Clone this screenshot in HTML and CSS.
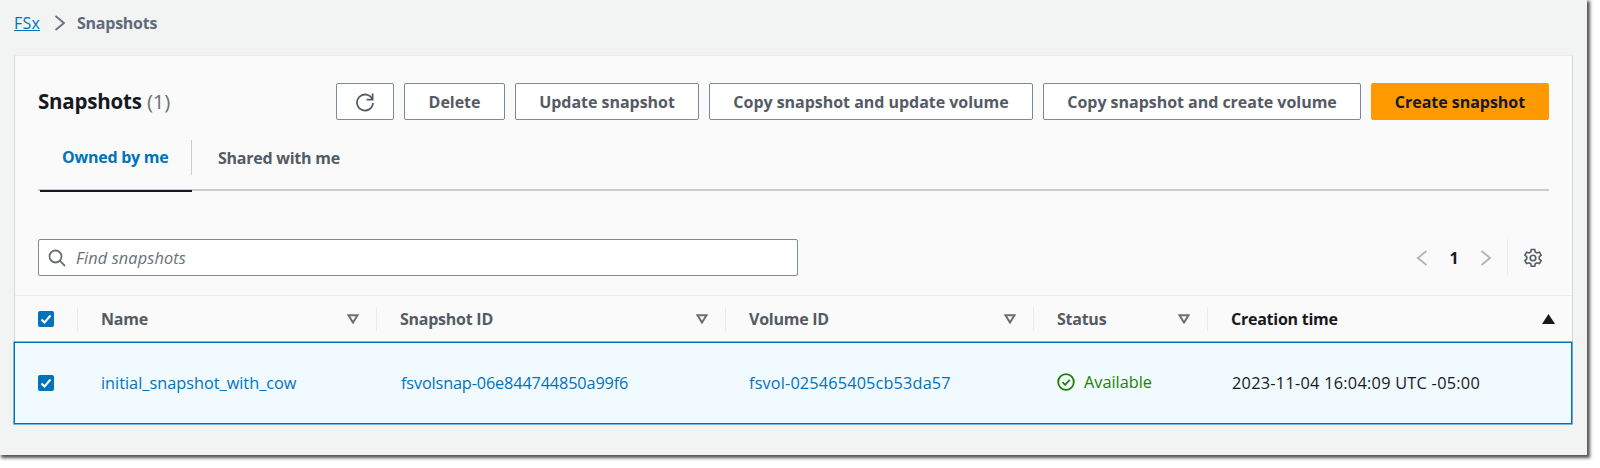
FILE: index.html
```html
<!DOCTYPE html>
<html lang="en">
<head>
<meta charset="utf-8">
<title>Snapshots</title>
<link rel="stylesheet" href="styles.css">
</head>
<body>
<div class="window">
  <nav class="crumbs">
    <a class="crumb-link" href="#">FSx</a>
    <svg class="crumb-sep" viewBox="0 0 12 16" width="12" height="16"><path d="M1.500 1 10 8l-8.500 7"/></svg>
    <span class="crumb-here">Snapshots</span>
  </nav>
  <section class="card">
    <header class="head">
      <h1 class="title">Snapshots <span class="count">(1)</span></h1>
      <div class="actions">
        <button class="btn btn-icon" aria-label="Refresh">
          <svg viewBox="0 0 20 20" width="20" height="20"><path d="M17.300 7.200A8 8 0 1 0 18 11"/><path d="M17.600 1.600v6h-6"/></svg>
        </button>
        <button class="btn btn-delete">Delete</button>
        <button class="btn btn-update">Update snapshot</button>
        <button class="btn btn-copy-update">Copy snapshot and update volume</button>
        <button class="btn btn-copy-create">Copy snapshot and create volume</button>
        <button class="btn btn-primary">Create snapshot</button>
      </div>
    </header>
    <div class="tabs">
      <a class="tab tab-active" href="#">Owned by me</a>
      <a class="tab" href="#">Shared with me</a>
    </div>
    <div class="tools">
      <div class="search">
        <svg class="search-icon" viewBox="0 0 18 18" width="18" height="18"><circle cx="7.500" cy="7.500" r="6"/><path d="m11.700 11.700 5.300 5.300"/></svg>
        <span class="search-text">Find snapshots</span>
      </div>
      <div class="pager">
        <svg class="pager-arrow" viewBox="0 0 12 16" width="12" height="16"><path d="M10.500 1 1.800 8l8.700 7"/></svg>
        <span class="page-num">1</span>
        <svg class="pager-arrow" viewBox="0 0 12 16" width="12" height="16"><path d="M1.500 1 10 8l-8.500 7"/></svg>
        <span class="pager-div"></span>
        <svg class="gear" viewBox="0 0 20 20" width="20" height="20"><path d="M8.300 1.500h3.400l.5 2.500 1.700 1 2.500-.8 1.700 3-1.900 1.700v2l1.900 1.700-1.700 3-2.500-.8-1.700 1-.5 2.500H8.300l-.5-2.500-1.700-1-2.500.8-1.700-3 1.900-1.700V9L1.900 7.200l1.700-3 2.500.8 1.700-1z"/><circle cx="10" cy="10" r="2.800"/></svg>
      </div>
    </div>
    <div class="table">
      <div class="tr thead">
        <div class="cell cell-check"><span class="check"><svg viewBox="0 0 16 16" width="16" height="16"><path d="m3.500 8.500 3 3 6-7"/></svg></span></div>
        <div class="cell th"><span>Name</span><svg class="sort" viewBox="0 0 12 10" width="12" height="10"><path d="M1.500 1.200h9L6 8.500z"/></svg></div>
        <div class="cell th"><span>Snapshot ID</span><svg class="sort" viewBox="0 0 12 10" width="12" height="10"><path d="M1.500 1.200h9L6 8.500z"/></svg></div>
        <div class="cell th"><span>Volume ID</span><svg class="sort" viewBox="0 0 12 10" width="12" height="10"><path d="M1.500 1.200h9L6 8.500z"/></svg></div>
        <div class="cell th"><span>Status</span><svg class="sort" viewBox="0 0 12 10" width="12" height="10"><path d="M1.500 1.200h9L6 8.500z"/></svg></div>
        <div class="cell th th-sorted"><span>Creation time</span><svg class="sort-on" viewBox="0 0 13 10" width="13" height="10"><path d="M0 10h13L6.500 0z"/></svg></div>
      </div>
      <div class="tr selected">
        <div class="cell cell-check"><span class="check"><svg viewBox="0 0 16 16" width="16" height="16"><path d="m3.500 8.500 3 3 6-7"/></svg></span></div>
        <div class="cell td"><a class="td-name" href="#">initial_snapshot_with_cow</a></div>
        <div class="cell td"><a class="td-snap" href="#">fsvolsnap-06e844744850a99f6</a></div>
        <div class="cell td"><a class="td-vol" href="#">fsvol-025465405cb53da57</a></div>
        <div class="cell td status">
          <svg viewBox="0 0 18 18" width="18" height="18"><circle cx="9" cy="9" r="7.800"/><path d="m5.500 9.200 2.600 2.600 4.600-5"/></svg>
          <span>Available</span>
        </div>
        <div class="cell td td-date">2023-11-04 16:04:09 UTC -05:00</div>
      </div>
    </div>
  </section>
</div>
</body>
</html>
```
FILE: styles.css
```css
* { box-sizing: border-box; }
html, body { margin: 0; padding: 0; background: #fff; }
body {
  width: 1600px;
  height: 468px;
  overflow: hidden;
  font-family: "Open Sans", "Noto Sans", "Liberation Sans", sans-serif;
  font-size: 16.3px;
  color: #16191f;
}
.window {
  width: 1587px;
  height: 455px;
  background: #f2f3f3;
  padding: 0 14px 0 14px;
  box-shadow: 2px 2px 3px 1px #555;
  display: flex;
  flex-direction: column;
}
.crumbs {
  height: 55px;
  padding-bottom: 10px;
  display: flex;
  align-items: center;
  font-size: 16px;
}
.crumb-link { color: #0073bb; text-decoration: underline; letter-spacing: .2px; }
.crumb-sep { margin: 0 11px 0 14px; }
.crumb-sep path { fill: none; stroke: #687078; stroke-width: 1.800; }
.crumb-here { color: #5f6b7a; font-weight: 700; letter-spacing: -.25px; }
.card {
  flex: none;
  width: 1559px;
  height: 370px;
  background: #fafafa;
  border-left: 1px solid #d5dbdb;
  border-right: 1px solid #d5dbdb;
  border-top: 1px solid #eaeded;
  display: flex;
  flex-direction: column;
}
.head {
  height: 81px;
  padding: 27px 23px 0 23px;
  display: flex;
  justify-content: space-between;
  align-items: flex-start;
}
.title {
  margin: 0;
  font-size: 20.500px;
  font-weight: 700;
  line-height: 36px;
  letter-spacing: -.2px;
}
.count { font-weight: 400; color: #687078; }
.actions { display: flex; gap: 10px; }
.btn {
  height: 37px;
  padding: 0;
  border: 1.500px solid #7d8998;
  border-radius: 2px;
  background: #fff;
  color: #545b64;
  font: 700 16px "Open Sans", "Noto Sans", sans-serif;
  letter-spacing: -.03px;
}
.btn-icon { width: 58px; display: flex; align-items: center; justify-content: center; }
.btn-icon svg { fill: none; stroke: #545b64; stroke-width: 1.800; }
.btn-delete { width: 101px; }
.btn-update { width: 184px; }
.btn-copy-update { width: 324px; }
.btn-copy-create { width: 318px; }
.btn-primary { width: 178px; background: #ff9900; border-color: #ff9900; color: #16191f; }
.tabs {
  margin: 0 23px;
  height: 54px;
  display: flex;
  border-bottom: 2px solid #c6ccd1;
  padding: 1px 0 0 2px;
}
.tab {
  width: 152px;
  height: 54px;
  padding: 0 0 14px 22px;
  display: flex;
  align-items: center;
  font-weight: 700;
  font-size: 16px;
  letter-spacing: -.25px;
  color: #545b64;
  text-decoration: none;
}
.tab-active {
  color: #0073bb;
  border-bottom: 2px solid #16191f;
  position: relative;
}
.tab-active::after {
  content: "";
  position: absolute;
  right: 0;
  top: 2px;
  height: 35px;
  border-right: 1px solid #c6ccd1;
}
.tab-active + .tab { padding-left: 26px; }
.tools {
  height: 104px;
  padding: 48px 23px 0 23px;
  display: flex;
  justify-content: space-between;
  align-items: flex-start;
  flex: none;
}
.search {
  width: 760px;
  height: 37px;
  background: #fff;
  border: 1.500px solid #7d8998;
  border-radius: 2px;
  display: flex;
  align-items: center;
  padding-left: 9px;
  gap: 10px;
}
.search-icon { fill: none; stroke: #687078; stroke-width: 1.800; }
.search-text { font-style: italic; color: #687078; letter-spacing: .15px; }
.pager { display: flex; align-items: center; height: 37px; }
.pager-arrow { fill: none; stroke: #aab7b8; stroke-width: 1.800; }
.page-num { font-weight: 700; width: 54px; text-align: center; margin: 0 -1px; font-size: 16px; }
.pager-div { width: 1px; height: 37px; background: #eaeded; margin: 0 15px 0 15px; }
.gear { fill: none; stroke: #545b64; stroke-width: 1.600; margin-right: 6px; }
.table { flex: none; }
.tr {
  display: grid;
  grid-template-columns: 62px 299px 349px 308px 174px 1fr;
}
.thead {
  height: 47px;
  border-top: 1px solid #eaeded;
}
.cell { display: flex; align-items: center; min-width: 0; }
.cell-check { padding-left: 23px; }
.check {
  width: 16px;
  height: 16px;
  background: #0073bb;
  border-radius: 2px;
  display: block;
}
.check svg { display: block; fill: none; stroke: #fff; stroke-width: 2; }
.th {
  padding: 0 17px 0 24px;
  justify-content: space-between;
  font-weight: 700;
  font-size: 16px;
  letter-spacing: -.25px;
  color: #545b64;
  position: relative;
}
.th::before {
  content: "";
  position: absolute;
  left: 0;
  top: 11px;
  height: 24px;
  border-left: 1px solid #eaeded;
}
.sort { fill: none; stroke: #687078; stroke-width: 2; }
.th-sorted { color: #16191f; padding-right: 17px; }
.sort-on { fill: #16191f; }
.selected {
  height: 82px;
  margin-left: -1px;
  padding-left: 1px;
  background: #f1faff;
  border: 1px solid #0073bb;
  box-shadow: 0 0 0 .5px #0073bb;
}
.selected .cell-check { padding-left: 22px; }
.td { padding-left: 24px; }
.td a { color: #0073bb; text-decoration: none; }
.td-name { margin-left: -1px; }
.td-snap { letter-spacing: -.15px; }
.td-vol { margin-left: -1px; letter-spacing: .15px; }
.td-date { letter-spacing: .27px; }
.status { color: #1d8102; gap: 9px; padding-left: 23px; padding-bottom: 2px; }
.status svg { fill: none; stroke: #1d8102; stroke-width: 1.800; flex: none; }
```
